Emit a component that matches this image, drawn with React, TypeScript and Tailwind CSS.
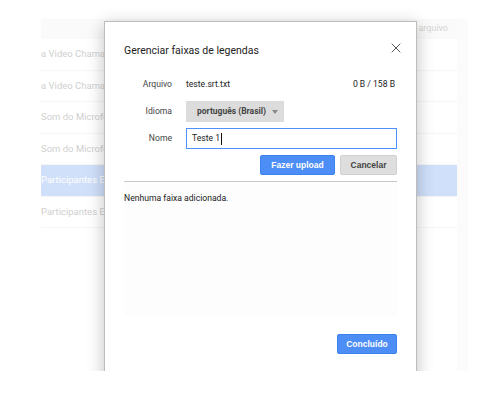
import { X } from 'lucide-react'

const rows = [
  { label: 'a Video Chamada', selected: false },
  { label: 'a Video Chamada', selected: false },
  { label: 'Som do Microfone', selected: false },
  { label: 'Som do Microfone', selected: false },
  { label: 'Participantes Externos', selected: true },
  { label: 'Participantes Externos', selected: false },
]

function Backdrop() {
  return (
    <div className="ml-[41px] mt-[19px] flex h-[352px] w-[427px]">
      <div className="flex w-[416px] flex-col">
        <div className="flex h-[20px] items-center justify-end bg-[#fafafa] pr-[9px] text-[9px] text-[#d4d4d4]">
          arquivo
        </div>
        {rows.map((row, i) => (
          <div
            key={i}
            className={`flex h-[31.5px] items-center border-b border-[#f6f6f6] text-[9.5px] whitespace-nowrap ${
              row.selected ? 'bg-[#d0e0fa] text-white' : 'text-[#d0d0d0]'
            }`}
          >
            {row.label}
          </div>
        ))}
      </div>
      <div className="w-[11px] bg-[#fbfbfb]" />
    </div>
  )
}

function Modal() {
  return (
    <div className="absolute left-[104px] top-[21px] flex h-[370px] w-[313px] flex-col border border-[#bdbdbd] bg-white px-[19px] shadow-[0_4px_16px_rgba(0,0,0,0.25)]">
      <div className="mt-[21px] flex h-[16px] items-center justify-between">
        <h2 className="text-[10.5px] leading-[16px] text-[#222]">Gerenciar faixas de legendas</h2>
        <X className="mr-[-7px] mt-[-6px] h-[16px] w-[16px] text-[#555]" strokeWidth={1.5} />
      </div>

      <div className="mt-[18px] flex h-[14px] items-center text-[8.6px]">
        <span className="w-[48px] text-right text-[#444]">Arquivo</span>
        <span className="ml-[14px] text-[#222]">teste.srt.txt</span>
        <span className="ml-auto mr-[2px] text-[#222]">0 B / 158 B</span>
      </div>

      <div className="mt-[10px] flex h-[21px] items-center text-[8.6px]">
        <span className="w-[48px] text-right text-[#444]">Idioma</span>
        <div className="ml-[14px] flex h-[21px] w-[98px] items-center whitespace-nowrap bg-[#dcdcdc] pl-[11px] text-[8.5px] font-bold text-[#444]">
          português (Brasil)
          <span className="ml-auto mr-[6px] h-0 w-0 border-x-[3.5px] border-t-[4px] border-x-transparent border-t-[#8a8a8a]" />
        </div>
      </div>

      <div className="mt-[6px] flex h-[21px] items-center text-[8.6px]">
        <span className="w-[48px] text-right text-[#444]">Nome</span>
        <div className="ml-[14px] flex h-[21px] flex-1 items-center border border-[#4d90fe] pl-[5px] text-[#222]">
          Teste 1<span className="ml-[1px] h-[12px] w-[1px] bg-[#111]" />
        </div>
      </div>

      <div className="mt-[6px] flex justify-end gap-[5px] font-['Liberation_Sans',Arial,sans-serif] text-[8.5px] font-bold">
        <button className="h-[20px] w-[75px] rounded-[2px] border border-[#3b82f0] bg-[#4d8ef6] text-white">
          Fazer upload
        </button>
        <button className="h-[20px] w-[57px] rounded-[2px] border border-[#d0d0d0] bg-[#dedede] text-[#444]">
          Cancelar
        </button>
      </div>

      <div className="mt-[6px] h-[1px] bg-[#c8c8c8]" />

      <div className="h-[134px] bg-[#fdfdfd] pt-[10px] text-[8.6px] text-[#222]">Nenhuma faixa adicionada.</div>

      <div className="mt-[18px] flex justify-end font-['Liberation_Sans',Arial,sans-serif] text-[8.5px] font-bold">
        <button className="h-[20px] w-[60px] rounded-[2px] border border-[#3b82f0] bg-[#4d8ef6] text-white">
          Concluído
        </button>
      </div>
    </div>
  )
}

export default function App() {
  return (
    <div className="h-[398px] w-[489px] bg-white font-['Roboto',Arial,sans-serif]">
      <div className="relative h-[371px] overflow-hidden">
        <Backdrop />
        <Modal />
      </div>
    </div>
  )
}
